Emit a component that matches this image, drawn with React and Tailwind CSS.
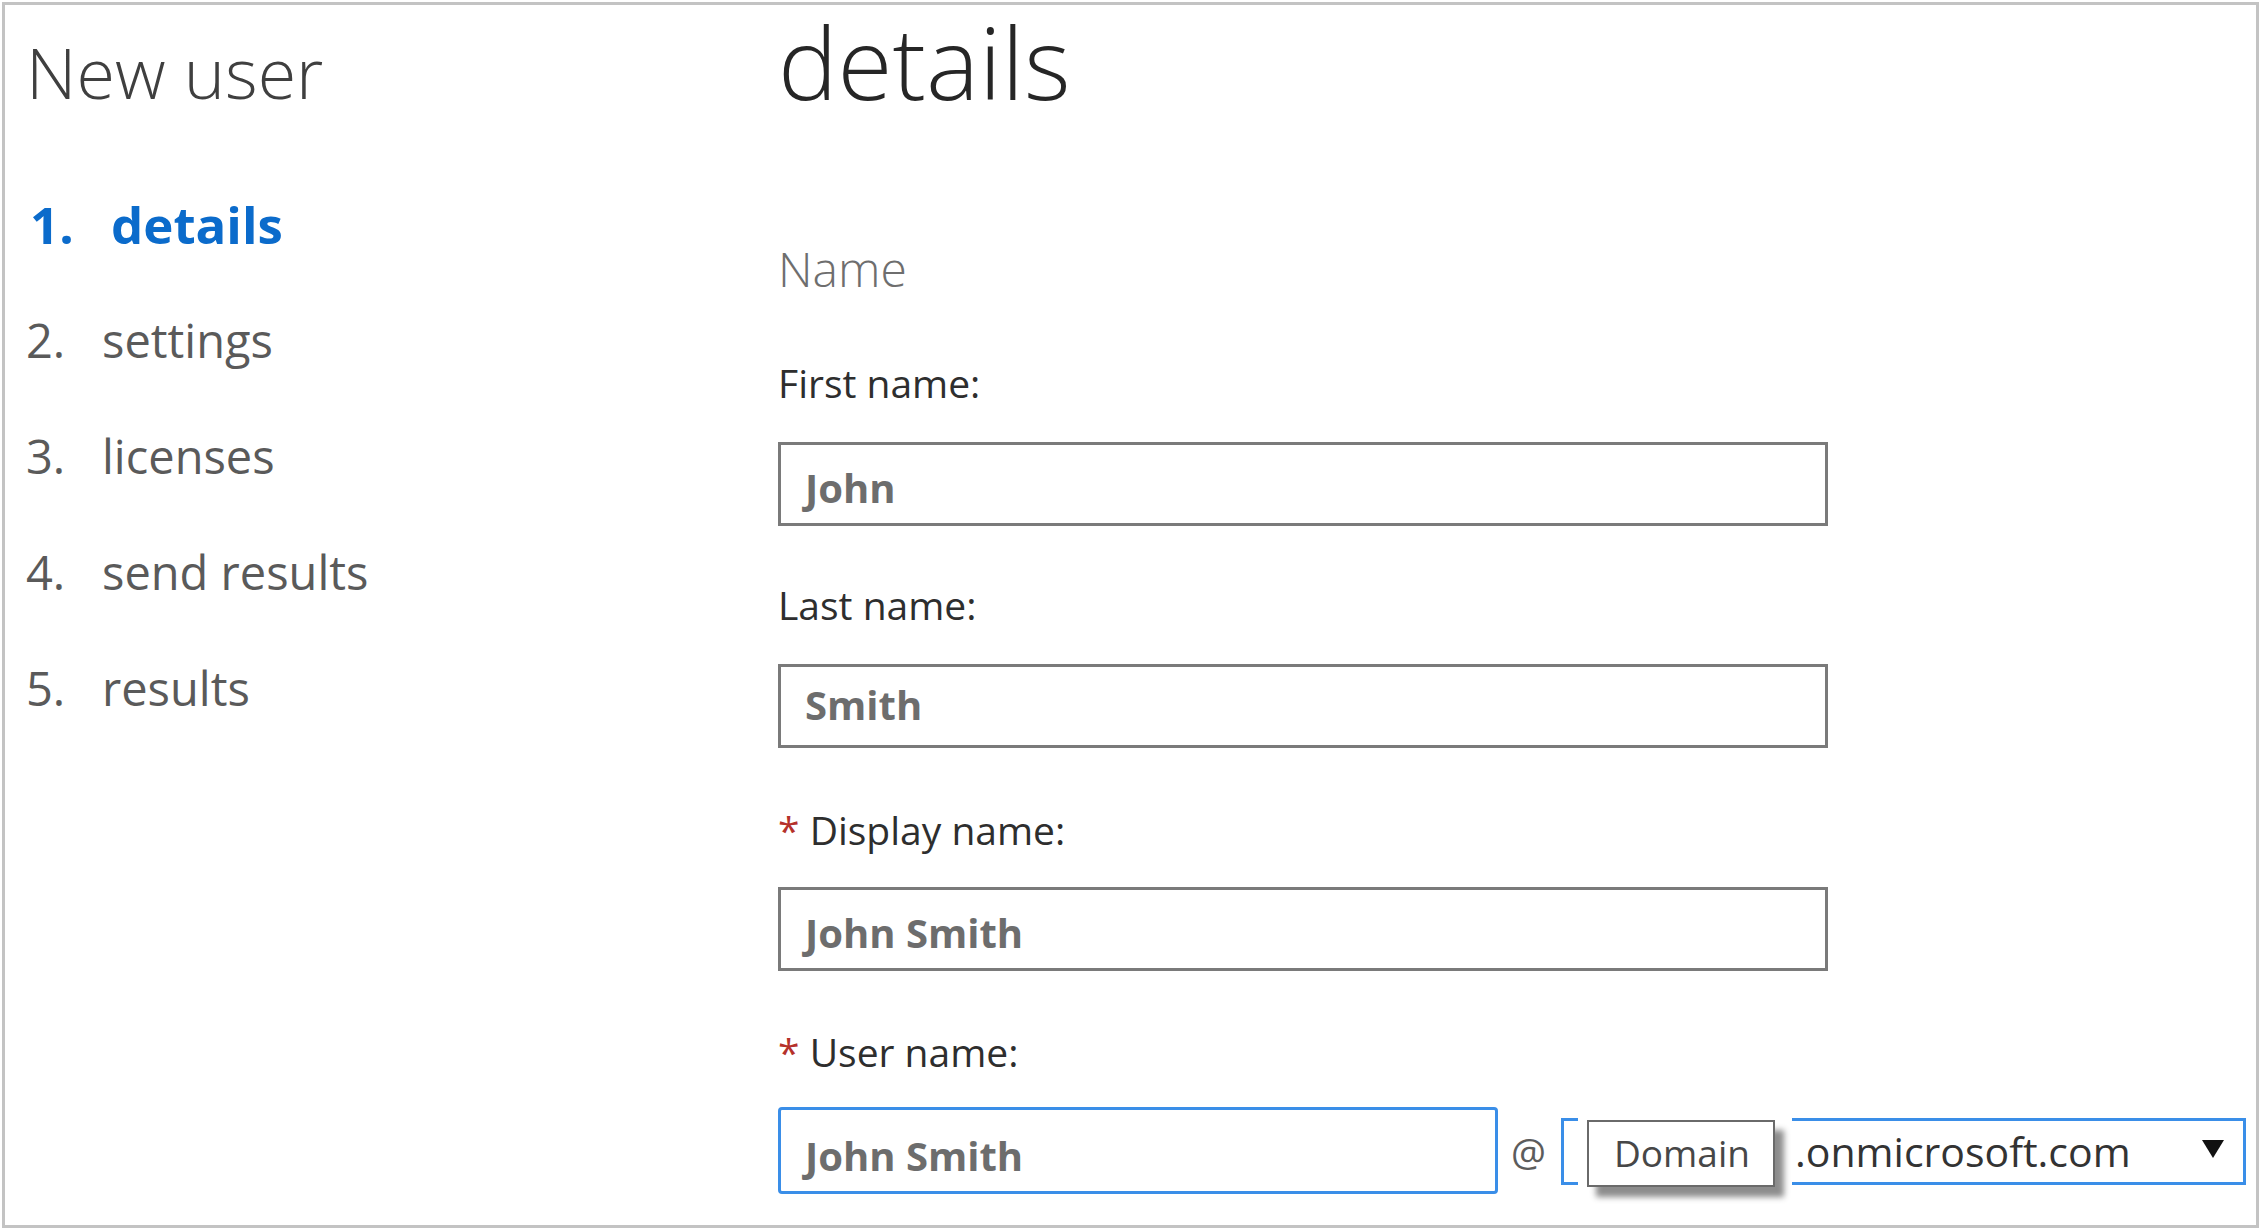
import React from 'react';

const steps = [
  { num: '2.', label: 'settings' },
  { num: '3.', label: 'licenses' },
  { num: '4.', label: 'send results' },
  { num: '5.', label: 'results' },
];

const Label = ({ children, required, className = '' }) => (
  <div className={`text-[39px] leading-[39px] text-[#2e2e2e] whitespace-nowrap ${className}`}>
    {required && <span className="text-[#b5312b]">* </span>}
    {children}
  </div>
);

const TextBox = ({ value, className = '', textClass = 'pt-[23px]' }) => (
  <div className={`h-[84px] w-[1050px] border-[3px] border-[#7a7a7a] pl-[24px] ${textClass} ${className}`}>
    <span className="block text-[40px] leading-[40px] font-bold text-[#6d6d6d]">{value}</span>
  </div>
);

const App = () => {
  return (
    <div className="w-[2262px] h-[1230px] bg-white pt-[2px] pl-[2px] pr-[3px] pb-[2px] font-['Open_Sans',sans-serif]">
      <div className="h-full border-[3px] border-[#c3c3c3] flex overflow-hidden">
        <nav className="w-[773px] shrink-0 pl-[21px]">
          <h1 className="mt-[32px] text-[70px] leading-[70px] font-light text-[#3f3f3f]">New user</h1>
          <ul className="mt-[59px]">
            <li className="flex h-[116px] leading-[116px] text-[51px] font-bold text-[#0b6bcb]">
              <span className="w-[85px] pl-[4px]">1.</span>
              <span>details</span>
            </li>
            {steps.map((s) => (
              <li key={s.num} className="flex h-[116px] leading-[116px] text-[47px] text-[#5a5a5a]">
                <span className="w-[76px]">{s.num}</span>
                <span>{s.label}</span>
              </li>
            ))}
          </ul>
        </nav>

        <main className="flex-1">
          <h2 className="mt-[4px] text-[100px] leading-[104px] font-light text-[#262626]">details</h2>
          <div className="mt-[132px] text-[48px] leading-[48px] font-light text-[#6e6e6e]">Name</div>

          <Label className="mt-[70px]">First name:</Label>
          <TextBox className="mt-[40px]" value="John" />

          <Label className="mt-[59px]">Last name:</Label>
          <TextBox className="mt-[40px]" value="Smith" textClass="pt-[18px]" />

          <Label required className="mt-[62px]">Display name:</Label>
          <TextBox className="mt-[38px]" value="John Smith" />

          <Label required className="mt-[61px]">User name:</Label>
          <div className="mt-[36px] flex items-start">
            <div className="h-[87px] w-[720px] rounded-[4px] border-[3px] border-[#3a8ee8] pl-[24px] pt-[26px]">
              <span className="block text-[40px] leading-[40px] font-bold text-[#6d6d6d]">John Smith</span>
            </div>
            <div className="w-[63px] pl-[13px] mt-[25px] text-[39px] leading-[39px] text-[#5c5c5c]">@</div>
            <div className="relative mt-[11px] h-[67px] w-[685px] border-[3px] border-[#3a8ee8] flex items-start">
              <span className="ml-[231px] pt-[10px] text-[41px] leading-[41px] text-[#333] whitespace-nowrap">.onmicrosoft.com</span>
              <svg className="ml-auto mr-[19px] mt-[19px]" width="22" height="18" viewBox="0 0 22 18">
                <polygon points="0,0 22,0 11,18" fill="#111" />
              </svg>

              <div className="absolute left-[14px] top-[-9px] w-[214px] h-[96px] bg-white pl-[9px] pt-[8px]">
                <div className="h-[67px] w-[188px] border-2 border-[#6a6a6a] bg-white pl-[25px] pt-[12px] shadow-[9px_10px_6px_rgba(0,0,0,0.45)]">
                  <span className="block text-[37px] leading-[37px] text-[#474747]">Domain</span>
                </div>
              </div>
            </div>
          </div>
        </main>
      </div>
    </div>
  );
};

export default App;
